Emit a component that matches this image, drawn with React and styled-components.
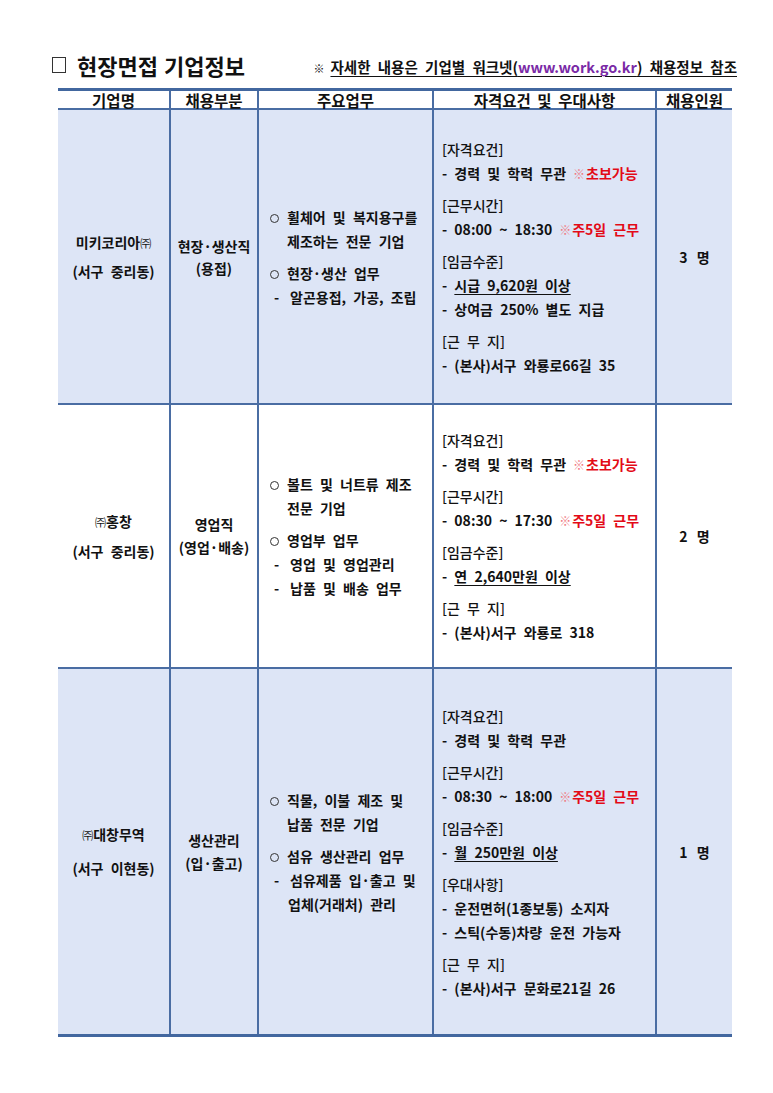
import React from 'react';
import styled, { createGlobalStyle } from 'styled-components';

const Global = createGlobalStyle`
  html, body { margin: 0; padding: 0; background: #fff; }
  body { font-family: "Noto Sans CJK KR", "Noto Sans", sans-serif; color: #111; }
`;

const Page = styled.div`
  width: 773px;
  height: 1093px;
  box-sizing: border-box;
  padding: 50px 36px 0 52px;
`;

const TitleRow = styled.div`
  display: flex;
  align-items: baseline;
  justify-content: space-between;
  height: 38px;
`;

const Title = styled.h1`
  margin: 0;
  font-size: 22px;
  font-weight: 700;
  line-height: 30px;
  word-spacing: 1px;
  display: flex;
  align-items: center;
`;

const Box = styled.span`
  display: inline-block;
  width: 14px;
  height: 16px;
  border: 1.3px solid #333;
  box-sizing: border-box;
  margin-right: 11px;
`;

const Note = styled.p`
  margin: 0;
  font-size: 14.5px;
  font-weight: 700;
  word-spacing: 4px;
`;

const NoteMark = styled.span`
  font-size: 11px;
  font-weight: 400;
  margin-right: 6px;
`;

const Underlined = styled.span`
  text-decoration: underline;
  text-underline-offset: 3px;
  text-decoration-thickness: 1px;
`;

const Url = styled.span`
  color: #7a2aa6;
`;

const Table = styled.div`
  margin-left: 6px;
  width: 674px;
  border-top: 3px solid #42679f;
  border-bottom: 3px solid #42679f;
`;

const Row = styled.div`
  display: grid;
  grid-template-columns: 113px 88px 175px 223px 75px;
  height: ${(p) => p.$h}px;
  background: ${(p) => (p.$tint ? '#dde5f6' : '#fff')};
  border-bottom: ${(p) => (p.$last ? 'none' : '2px solid #4a6da3')};
  box-sizing: border-box;
`;

const Cell = styled.div`
  border-right: ${(p) => (p.$end ? 'none' : '2px solid #4a6da3')};
  display: flex;
  flex-direction: column;
  justify-content: center;
  align-items: ${(p) => (p.$align === 'left' ? 'flex-start' : 'center')};
  padding: ${(p) => p.$pad || '0'};
  box-sizing: border-box;
  font-size: 14px;
  font-weight: 700;
  word-spacing: 4px;
  min-width: 0;
`;

const HeadCell = styled(Cell)`
  font-size: 15.5px;
  line-height: 18px;
  word-spacing: 3px;
`;

const CenterLine = styled.div`
  line-height: ${(p) => p.$lh || 24}px;
  text-align: center;
  white-space: nowrap;
`;

const Corp = styled.span`
  font-size: 11px;
  font-weight: 400;
`;

const Bullet = styled.div`
  display: flex;
  line-height: 24px;
  margin-top: ${(p) => (p.$first ? 0 : 8)}px;
`;

const SubItem = styled.div`
  display: flex;
  line-height: 24px;
`;

const Marker = styled.span`
  flex: 0 0 ${(p) => p.$w}px;
  padding-left: ${(p) => p.$pl || 0}px;
  box-sizing: border-box;
`;

const Circle = styled.span`
  display: inline-block;
  width: 9px;
  height: 9px;
  border: 1.2px solid #333;
  border-radius: 50%;
  box-sizing: border-box;
  margin: 8px 0 0 1px;
`;

const Wrapped = styled.div`
  white-space: nowrap;
  margin-left: ${(p) => (p.$cont ? -2 : 0)}px;
`;

const Group = styled.div`
  margin-top: ${(p) => (p.$first ? 0 : 8)}px;
`;

const GroupHead = styled.div`
  height: 24px;
  line-height: 24px;
  font-weight: 500;
  white-space: nowrap;
`;

const Detail = styled.div`
  height: 24px;
  line-height: 24px;
  white-space: nowrap;
`;

const Red = styled.span`
  color: #e30a17;
`;

const RedMark = styled.span`
  color: #f07880;
  font-size: 12px;
  line-height: 0;
  font-weight: 400;
  margin-left: 7px;
  margin-right: 1px;
`;

const U = styled.span`
  text-decoration: underline;
  text-underline-offset: 3px;
  text-decoration-thickness: 1px;
`;

const Count = styled.div`
  line-height: 24px;
  word-spacing: 6px;
`;

const rows = [
  {
    h: 295,
    tint: true,
    name: [<>미키코리아<Corp>㈜</Corp></>, '(서구 중리동)'],
    nameLh: 28,
    part: ['현장·생산직', '(용접)'],
    partLh: 22,
    tasks: [
      { lines: ['휠체어 및 복지용구를', '제조하는 전문 기업'], subs: [] },
      { lines: ['현장·생산 업무'], subs: [['알곤용접, 가공, 조립']] },
    ],
    groups: [
      { head: '[자격요건]', items: [<>- 경력 및 학력 무관<RedMark>※</RedMark><Red>초보가능</Red></>] },
      { head: '[근무시간]', items: [<>- 08:00 ~ 18:30<RedMark>※</RedMark><Red>주5일 근무</Red></>] },
      { head: '[임금수준]', items: [<>- <U>시급 9,620원 이상</U></>, '- 상여금 250% 별도 지급'] },
      { head: '[근 무 지]', items: ['- (본사)서구 와룡로66길 35'] },
    ],
    count: '3 명',
  },
  {
    h: 264,
    tint: false,
    name: [<><Corp>㈜</Corp>홍창</>, '(서구 중리동)'],
    nameLh: 29,
    part: ['영업직', '(영업·배송)'],
    partLh: 23,
    tasks: [
      { lines: ['볼트 및 너트류 제조', '전문 기업'], subs: [] },
      { lines: ['영업부 업무'], subs: [['영업 및 영업관리'], ['납품 및 배송 업무']] },
    ],
    groups: [
      { head: '[자격요건]', items: [<>- 경력 및 학력 무관<RedMark>※</RedMark><Red>초보가능</Red></>] },
      { head: '[근무시간]', items: [<>- 08:30 ~ 17:30<RedMark>※</RedMark><Red>주5일 근무</Red></>] },
      { head: '[임금수준]', items: [<>- <U>연 2,640만원 이상</U></>] },
      { head: '[근 무 지]', items: ['- (본사)서구 와룡로 318'] },
    ],
    count: '2 명',
  },
  {
    h: 365,
    tint: true,
    last: true,
    name: [<><Corp>㈜</Corp>대창무역</>, '(서구 이현동)'],
    nameLh: 33,
    part: ['생산관리', '(입·출고)'],
    partLh: 23,
    tasks: [
      { lines: ['직물, 이불 제조 및', '납품 전문 기업'], subs: [] },
      { lines: ['섬유 생산관리 업무'], subs: [['섬유제품 입·출고 및', '업체(거래처) 관리']] },
    ],
    groups: [
      { head: '[자격요건]', items: ['- 경력 및 학력 무관'] },
      { head: '[근무시간]', items: [<>- 08:30 ~ 18:00<RedMark>※</RedMark><Red>주5일 근무</Red></>] },
      { head: '[임금수준]', items: [<>- <U>월 250만원 이상</U></>] },
      { head: '[우대사항]', items: ['- 운전면허(1종보통) 소지자', '- 스틱(수동)차량 운전 가능자'] },
      { head: '[근 무 지]', items: ['- (본사)서구 문화로21길 26'] },
    ],
    count: '1 명',
  },
];

const headers = ['기업명', '채용부분', '주요업무', '자격요건 및 우대사항', '채용인원'];

export default function App() {
  return (
    <>
      <Global />
      <Page>
        <TitleRow>
          <Title>
            <Box />
            현장면접 기업정보
          </Title>
          <Note>
            <NoteMark>※</NoteMark>
            <Underlined>
              자세한 내용은 기업별 워크넷(<Url>www.work.go.kr</Url>) 채용정보 참조
            </Underlined>
          </Note>
        </TitleRow>
        <Table>
          <Row $h={19}>
            {headers.map((h, i) => (
              <HeadCell key={h} $end={i === headers.length - 1}>
                {h}
              </HeadCell>
            ))}
          </Row>
          {rows.map((r, ri) => (
            <Row key={ri} $h={r.h} $tint={r.tint} $last={r.last}>
              <Cell>
                {r.name.map((n, i) => (
                  <CenterLine key={i} $lh={r.nameLh}>
                    {n}
                  </CenterLine>
                ))}
              </Cell>
              <Cell>
                {r.part.map((n, i) => (
                  <CenterLine key={i} $lh={r.partLh}>
                    {n}
                  </CenterLine>
                ))}
              </Cell>
              <Cell $align="left" $pad="0 4px 0 10px">
                {r.tasks.map((t, ti) => (
                  <div key={ti}>
                    <Bullet $first={ti === 0}>
                      <Marker $w={18}>
                        <Circle />
                      </Marker>
                      <div>
                        {t.lines.map((l, li) => (
                          <Wrapped key={li}>{l}</Wrapped>
                        ))}
                      </div>
                    </Bullet>
                    {t.subs.map((s, si) => (
                      <SubItem key={si}>
                        <Marker $w={21} $pl={5}>-</Marker>
                        <div>
                          {s.map((l, li) => (
                            <Wrapped key={li} $cont={li > 0}>{l}</Wrapped>
                          ))}
                        </div>
                      </SubItem>
                    ))}
                  </div>
                ))}
              </Cell>
              <Cell $align="left" $pad="0 4px 0 8px">
                {r.groups.map((g, gi) => (
                  <Group key={gi} $first={gi === 0}>
                    <GroupHead>{g.head}</GroupHead>
                    {g.items.map((it, ii) => (
                      <Detail key={ii}>{it}</Detail>
                    ))}
                  </Group>
                ))}
              </Cell>
              <Cell $end>
                <Count>{r.count}</Count>
              </Cell>
            </Row>
          ))}
        </Table>
      </Page>
    </>
  );
}
